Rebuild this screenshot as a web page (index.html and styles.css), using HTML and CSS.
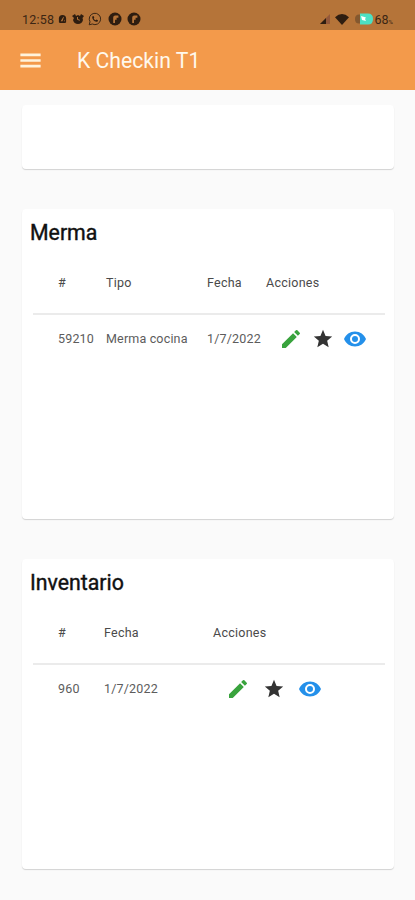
FILE: index.html
```html
<!DOCTYPE html>
<html lang="es">
<head>
    <meta charset="UTF-8">
    <meta name="viewport" content="width=device-width, initial-scale=1.0">
    <title>K Checkin T1</title>
    <link rel="stylesheet" href="styles.css">
</head>
<body>
    <!-- Icons used more than once -->
    <svg class="sprite">
        <symbol id="edit" viewBox="0 0 24 24"><path d="M3 17.25V21h3.75L17.81 9.94l-3.75-3.75L3 17.25zM20.71 7.04a1 1 0 0 0 0-1.41l-2.34-2.34a1 1 0 0 0-1.41 0l-1.83 1.83 3.75 3.75 1.83-1.83z"/></symbol>
        <symbol id="star" viewBox="0 0 24 24"><path d="M12 17.27L18.18 21l-1.64-7.03L22 9.24l-7.19-.61L12 2 9.19 8.63 2 9.24l5.46 4.73L5.82 21z"/></symbol>
        <symbol id="eye" viewBox="0 0 24 24"><path d="M12 4.5C7 4.5 2.73 7.61 1 12c1.73 4.39 6 7.5 11 7.5s9.27-3.11 11-7.5c-1.73-4.39-6-7.5-11-7.5zM12 17a5 5 0 1 1 0-10 5 5 0 0 1 0 10zm0-8a3 3 0 1 0 0 6 3 3 0 0 0 0-6z"/></symbol>
        <symbol id="app" viewBox="0 0 14 14"><circle cx="7" cy="7" r="6.5"/><path class="cutout" d="M5.2 11V5.5q0-2 2-2h3.2v2.2H8.6v2.1H7V11z"/></symbol>
    </svg>

    <div class="status-bar">
        <span class="clock">12:58</span>
        <svg class="icon-bell" viewBox="0 0 10 12"><path d="M1 9V5q0-4 4-4t4 4v4l-1 1H2z"/><path class="cutout" d="M3 8l3-5 .5.5L5 8zM6.500 8l1-2v2z"/></svg>
        <svg class="icon-alarm" viewBox="0 0 12 12"><path d="M0 3l3-2 1 2 2-1 2 1 1-2 3 2-1.5 2 .5 2q-1 4-5 4T1 7l1-2z"/><path class="cutout" d="M5 4h1v2l2 1-.5.8L5 6.6z"/></svg>
        <svg class="icon-chat" viewBox="0 0 14 14"><path class="line" d="M1.2 12.8l.8-3A5.7 5.7 0 1 1 4.3 12z"/><path d="M4.5 4.2l1-.3.8 1.7-.6.8q.7 1.3 2 1.9l.8-.8 1.6.9q-.1 1.6-1.8 1.4Q4.8 9 4.2 5.6z"/></svg>
        <svg class="icon-app"><use href="#app"/></svg>
        <svg class="icon-app"><use href="#app"/></svg>
        <div class="status-right">
            <svg class="icon-signal" viewBox="0 0 10 10"><path class="faint" d="M10 0v10H0z"/><path d="M6 4v6H0z"/></svg>
            <svg class="icon-wifi" viewBox="0 0 14 11"><path d="M0 3.2Q7-3 14 3.2L7 11z"/></svg>
            <svg class="icon-battery" viewBox="0 0 19 12"><path class="battery-empty" d="M7 1.5H4Q0 1.5 0 6t4 4.5h3z"/><path class="battery-full" d="M5 .5h8q5 0 5 5.500t-5 5.500H5z"/><path class="bolt" d="M6 3l5 1.500-1 1.500 1 2-4-1z"/></svg>
            <span class="percent">68<small>%</small></span>
        </div>
    </div>

    <header class="app-bar">
        <svg class="icon-menu" viewBox="0 0 24 24"><path d="M3 18.200h18v-2.400H3v2.400zm0-5h18v-2.400H3v2.400zm0-7.400v2.400h18V5.800H3z"/></svg>
        <h1>K Checkin T1</h1>
    </header>

    <main>
        <section class="card card-empty"></section>

        <section class="card">
            <h2>Merma</h2>
            <div class="table merma">
                <div class="row head">
                    <span>#</span>
                    <span>Tipo</span>
                    <span>Fecha</span>
                    <span>Acciones</span>
                </div>
                <div class="row">
                    <span>59210</span>
                    <span>Merma cocina</span>
                    <span>1/7/2022</span>
                    <div class="actions">
                        <svg class="edit"><use href="#edit"/></svg>
                        <svg class="star"><use href="#star"/></svg>
                        <svg class="eye"><use href="#eye"/></svg>
                    </div>
                </div>
            </div>
        </section>

        <section class="card">
            <h2>Inventario</h2>
            <div class="table inventario">
                <div class="row head">
                    <span>#</span>
                    <span>Fecha</span>
                    <span>Acciones</span>
                </div>
                <div class="row">
                    <span>960</span>
                    <span>1/7/2022</span>
                    <div class="actions">
                        <svg class="edit"><use href="#edit"/></svg>
                        <svg class="star"><use href="#star"/></svg>
                        <svg class="eye"><use href="#eye"/></svg>
                    </div>
                </div>
            </div>
        </section>
    </main>
</body>
</html>
```
FILE: styles.css
```css
* { box-sizing: border-box; }
body {
    margin: 0;
    height: 900px;
    overflow: hidden;
    background: #fafafa;
    font-family: Roboto, sans-serif;
}
svg { display: block; flex: none; }
.sprite { display: none; }

/* Phone status bar */
.status-bar {
    display: flex;
    align-items: center;
    height: 30px;
    padding: 8px 21px 0 22px;
    background: #b57439;
    color: #3b2614;
    fill: #2e1d10;
}
.clock {
    width: 36px;
    font-size: 12.5px;
    letter-spacing: 0.2px;
}
.cutout { fill: #b57439; }
.icon-bell { width: 9px; height: 11px; margin-right: 5px; }
.icon-alarm { width: 12px; height: 12px; margin-right: 4px; }
.icon-chat { width: 14px; height: 14px; margin-right: 6px; }
.icon-app { width: 14px; height: 14px; margin-right: 5px; }
.line { fill: none; stroke: #3b2614; stroke-width: 1; }
.status-right {
    display: flex;
    align-items: center;
    margin-left: auto;
}
.icon-signal { width: 10px; height: 10px; margin-right: 5px; }
.faint { fill: #94583a; }
.icon-wifi { width: 14px; height: 11px; margin-right: 6px; }
.icon-battery { width: 19px; height: 12px; margin-right: 1px; }
.battery-empty { fill: #84582f; }
.battery-full { fill: #4ce0c3; }
.bolt { fill: #fff; }
.percent { margin-right: 1px; font-size: 12.5px; }
.percent small { font-size: 6px; }

/* App bar */
.app-bar {
    display: flex;
    align-items: center;
    height: 60px;
    padding-left: 17px;
    background: #f39a4b;
    color: #fff8ec;
}
.icon-menu { width: 27px; height: 27px; fill: #fff3dc; }
.app-bar h1 {
    margin: 0 0 0 33px;
    font-size: 21.2px;
    font-weight: 400;
}

main {
    display: flex;
    flex-direction: column;
    gap: 40px;
    padding: 15px 21px 0 22px;
}
.card {
    height: 310px;
    padding: 10px 9px 0 8px;
    border-radius: 4px;
    background: #fff;
    box-shadow: 0 1px 1px rgba(0, 0, 0, 0.16);
}
.card-empty { height: 64px; }
.card h2 {
    margin: 0;
    font-size: 21.3px;
    line-height: 28px;
    font-weight: 400;
    color: #111;
    -webkit-text-stroke: 0.4px #111;
}

/* Tables */
.table { margin: 5px 0 0 3px; }
.row {
    display: grid;
    align-items: center;
    height: 49px;
    padding-left: 25px;
    font-size: 12.5px;
    letter-spacing: 0.17px;
    color: #5c5c5c;
}
.row.head {
    height: 63px;
    border-bottom: 2px solid #ebebeb;
    color: #4a4a4a;
    letter-spacing: 0.25px;
}
.row:last-child { height: 47px; }
.merma .row { grid-template-columns: 48px 101px 59px 1fr; }
.inventario .row { grid-template-columns: 46px 109px 1fr; }
.actions {
    display: flex;
    align-items: center;
    gap: 9px;
    padding-left: 13px;
}
.inventario .actions { gap: 13px; }
.edit { width: 24px; height: 24px; fill: #39a33d; }
.star { width: 22px; height: 22px; fill: #333; }
.eye { width: 24px; height: 24px; fill: #2490ea; }
```
